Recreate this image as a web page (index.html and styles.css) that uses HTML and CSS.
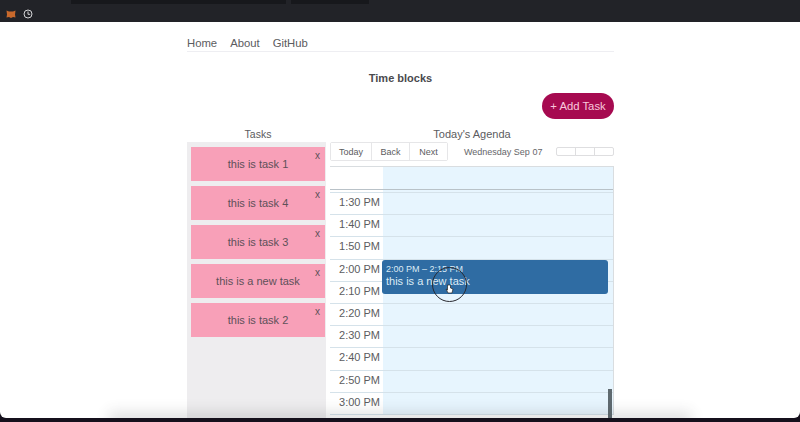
FILE: index.html
```html
<!DOCTYPE html>
<html lang="en">
<head>
    <meta charset="UTF-8">
    <meta name="viewport" content="width=device-width, initial-scale=1.0">
    <title>Time blocks</title>
    <link rel="stylesheet" href="styles.css">
</head>
<body>

    <!-- Browser bar -->
    <div class="browser-bar">
        <div class="browser-tabs">
            <span class="browser-tab tab-wide"></span>
            <span class="browser-tab tab-small"></span>
        </div>
        <div class="browser-icons">
            <svg width="10" height="10" viewBox="0 0 10 10"><path d="M.5 1.500l2.500 1h4l2.500-1-.5 4 .5 3-2.500-.5L5 9 3 8 .5 8.500l.5-3z" fill="#c9692c"/></svg>
            <svg width="10" height="10" viewBox="0 0 10 10" fill="none" stroke="#d4d4d6" stroke-width="1"><circle cx="5" cy="5" r="4"/><path d="M5 2.500V5.300H7.200"/></svg>
        </div>
    </div>

    <div class="page">
        <div class="container">

            <!-- Navigation Bar -->
            <nav>
                <a href="#">Home</a>
                <a href="#">About</a>
                <a href="#">GitHub</a>
            </nav>

            <h1>Time blocks</h1>

            <div class="add-row">
                <button class="add-button">+ Add Task</button>
            </div>

            <div class="board">
                <div class="tasks">
                    <h2>Tasks</h2>
                    <div class="task-list">
                        <div class="task"><span class="task-x">x</span>this is task 1</div>
                        <div class="task"><span class="task-x">x</span>this is task 4</div>
                        <div class="task"><span class="task-x">x</span>this is task 3</div>
                        <div class="task"><span class="task-x">x</span>this is a new task</div>
                        <div class="task"><span class="task-x">x</span>this is task 2</div>
                    </div>
                </div>

                <div class="agenda">
                    <h2>Today's Agenda</h2>
                    <div class="toolbar">
                        <div class="btn-group">
                            <button>Today</button>
                            <button>Back</button>
                            <button>Next</button>
                        </div>
                        <span class="toolbar-date">Wednesday Sep 07</span>
                        <div class="view-group"><span></span><span></span><span></span></div>
                    </div>

                    <div class="calendar">
                        <div class="cal-header">
                            <div class="cal-gutter"></div>
                            <div class="cal-allday"></div>
                        </div>
                        <div class="cal-body">
                            <div class="slot slot-first"><div class="slot-time"></div><div class="slot-day"></div></div>
                            <div class="slot"><div class="slot-time">1:30 PM</div><div class="slot-day"></div></div>
                            <div class="slot"><div class="slot-time">1:40 PM</div><div class="slot-day"></div></div>
                            <div class="slot"><div class="slot-time">1:50 PM</div><div class="slot-day"></div></div>
                            <div class="slot"><div class="slot-time">2:00 PM</div><div class="slot-day"></div></div>
                            <div class="slot"><div class="slot-time">2:10 PM</div><div class="slot-day"></div></div>
                            <div class="slot"><div class="slot-time">2:20 PM</div><div class="slot-day"></div></div>
                            <div class="slot"><div class="slot-time">2:30 PM</div><div class="slot-day"></div></div>
                            <div class="slot"><div class="slot-time">2:40 PM</div><div class="slot-day"></div></div>
                            <div class="slot"><div class="slot-time">2:50 PM</div><div class="slot-day"></div></div>
                            <div class="slot"><div class="slot-time">3:00 PM</div><div class="slot-day"></div></div>

                            <!-- lies over the slots -->
                            <div class="event">
                                <div class="event-time">2:00 PM – 2:15 PM</div>
                                <div class="event-title">this is a new task</div>
                            </div>
                            <div class="cursor-ring">
                                <svg width="9" height="10" viewBox="0 0 9 10"><path d="M2.500 1v5L1 5l2 4h4l1-4-2.500-1V1z" fill="#fff" stroke="#222" stroke-width=".7"/></svg>
                            </div>
                            <div class="scroll-thumb"></div>
                        </div>
                    </div>
                </div>
            </div>

        </div>
        <div class="page-fade"></div>
    </div>

    <div class="dock-strip"></div>

</body>
</html>
```

FILE: styles.css
```css
/* Basic Styling */
html, body {
    height: 100%;
    margin: 0;
    padding: 0;
    overflow: hidden;
    font-family: "Liberation Sans", Arial, sans-serif;
    background-color: #15101c;
    color: #555558;
}

body {
    display: flex;
    flex-direction: column;
}

/* Browser bar */
.browser-bar {
    height: 22px;
    flex: none;
    background: #222328;
}

.browser-tabs {
    display: flex;
    gap: 5px;
    padding-left: 71px;
}

.browser-tab {
    height: 4px;
    background: #17181c;
}

.tab-wide {
    width: 215px;
}

.tab-small {
    width: 78px;
}

.browser-icons {
    display: flex;
    gap: 7px;
    align-items: center;
    padding: 5px 0 0 6px;
}

/* Page */
.page {
    flex: 1;
    min-height: 0;
    overflow: hidden;
    position: relative;
    background: #ffffff;
    border-radius: 0 0 6px 6px;
}

.container {
    width: 427px;
    margin-left: 187px;
}

nav {
    display: flex;
    gap: 13px;
    height: 30px;
    box-sizing: border-box;
    padding-top: 15px;
    border-bottom: 1px solid #eeeef2;
    font-size: 11.300px;
    line-height: 13px;
}

nav a {
    color: #5c5c60;
    text-decoration: none;
}

h1 {
    margin: 19px 0 0;
    font-size: 11px;
    line-height: 14px;
    text-align: center;
    color: #4a4a4e;
}

.add-row {
    display: flex;
    justify-content: flex-end;
    margin-top: 8px;
}

.add-button {
    width: 72px;
    height: 26px;
    padding: 0;
    border: none;
    border-radius: 13px;
    background: #a60a50;
    color: #f8c8dc;
    font-family: inherit;
    font-size: 11.300px;
}

.board {
    display: flex;
    gap: 4px;
    margin-top: 9px;
}

h2 {
    margin: 0;
    padding-bottom: 2px;
    font-size: 11px;
    font-weight: normal;
    line-height: 12px;
    text-align: center;
    color: #5c5c60;
}

/* Tasks column */
.tasks {
    width: 139px;
    flex: none;
}

.tasks h2 {
    padding-left: 3px;
    font-size: 10.500px;
}

.task-list {
    height: 300px;
    box-sizing: border-box;
    padding: 5px 1px 0 4px;
    display: flex;
    flex-direction: column;
    gap: 5px;
    background: #eeedef;
}

.task {
    height: 34px;
    flex: none;
    position: relative;
    display: flex;
    align-items: center;
    justify-content: center;
    background: #f8a0b8;
    font-size: 11px;
    color: #5e5058;
}

.task-x {
    position: absolute;
    top: 3px;
    right: 5px;
    font-size: 10px;
    line-height: 12px;
}

/* Agenda column */
.agenda {
    flex: 1;
    min-width: 0;
}

.toolbar {
    display: flex;
    align-items: center;
    height: 19px;
}

.btn-group {
    display: flex;
    height: 19px;
    border: 1px solid #e6e6e8;
    box-sizing: border-box;
    border-radius: 2px;
}

.btn-group button {
    height: 100%;
    padding: 0;
    border: none;
    border-left: 1px solid #e6e6e8;
    background: #ffffff;
    color: #5c5c60;
    font-family: inherit;
    font-size: 9px;
    width: 38px;
}

.btn-group button:first-child {
    border-left: none;
    width: 40px;
}

.toolbar-date {
    margin-left: 16px;
    font-size: 9px;
    color: #66666a;
    white-space: nowrap;
}

.view-group {
    display: flex;
    margin-left: auto;
    height: 7px;
    border: 1px solid #dedee0;
    border-radius: 2px;
}

.view-group span {
    width: 18px;
    border-left: 1px solid #dedee0;
}

.view-group span:first-child {
    border-left: none;
}

.calendar {
    margin-top: 5px;
    border-top: 1px solid #d9dde0;
    border-right: 1px solid #d9dde0;
}

.cal-header {
    display: flex;
    height: 22px;
    border-bottom: 1px solid #b9c2c8;
}

.cal-gutter {
    width: 53px;
    flex: none;
    background: #ffffff;
}

.cal-allday {
    flex: 1;
    background: #e7f5fe;
}

.cal-body {
    position: relative;
}

.slot {
    display: flex;
    height: 22.200px;
    box-sizing: border-box;
    border-bottom: 1px solid #d5e2ea;
}

.slot-time {
    width: 53px;
    flex: none;
    box-sizing: border-box;
    padding-right: 3px;
    text-align: right;
    font-size: 11px;
    line-height: 19px;
    color: #5c5c60;
}

.slot-day {
    flex: 1;
    background: #e7f5fe;
}

.slot-first {
    height: 3px;
}

/* Event over the slots */
.event {
    position: absolute;
    top: 70px;
    left: 52px;
    width: 226px;
    height: 34px;
    box-sizing: border-box;
    padding: 4px;
    border-radius: 3px;
    background: #2f6ca3;
    color: #dcebf5;
}

.event-time {
    font-size: 9px;
    line-height: 10px;
}

.event-title {
    font-size: 11px;
    line-height: 15px;
}

.cursor-ring {
    position: absolute;
    top: 77px;
    left: 102px;
    width: 35px;
    height: 35px;
    box-sizing: border-box;
    border: 1px solid #2a2a30;
    border-radius: 50%;
    display: flex;
    align-items: center;
    justify-content: center;
}

.cursor-ring svg {
    margin-top: 9px;
}

.scroll-thumb {
    position: absolute;
    top: 199px;
    right: 1px;
    width: 4px;
    height: 40px;
    background: #5f6a70;
}

/* Dock shadow at the bottom of the window */
.page-fade {
    position: absolute;
    left: 115px;
    right: 115px;
    bottom: -6px;
    height: 6px;
    box-shadow: 0 0 14px 6px rgba(60, 60, 70, 0.16);
}

.dock-strip {
    height: 4px;
    flex: none;
    background: #15101c;
}
```
